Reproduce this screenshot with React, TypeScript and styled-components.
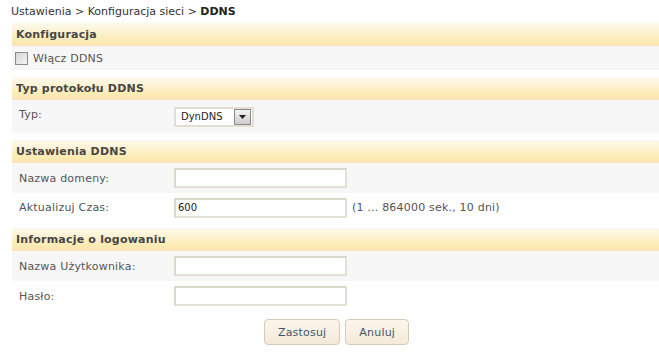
import React, { useState } from "react";
import styled, { createGlobalStyle } from "styled-components";

const Global = createGlobalStyle`
  html, body {
    margin: 0;
    padding: 0;
    background: #fff;
  }
  body {
    font-family: "DejaVu Sans", Verdana, sans-serif;
    font-size: 11px;
    color: #4d4d4d;
  }
`;

const Page = styled.div`
  width: 659px;
  height: 360px;
  padding: 5px 0 0 12px;
  box-sizing: border-box;
  overflow: hidden;
`;

const Crumbs = styled.div`
  font-size: 11px;
  color: #333;
  height: 18px;
  margin-left: -1px;

  b {
    font-weight: bold;
    color: #222;
  }
`;

const Section = styled.section<{ gap?: number }>`
  margin-bottom: ${(p) => p.gap ?? 7}px;
`;

const Head = styled.h3`
  margin: 0;
  height: 23px;
  line-height: 23px;
  padding-left: 4px;
  font-size: 11px;
  font-weight: bold;
  letter-spacing: 0.2px;
  color: #464646;
  background: linear-gradient(
    to bottom,
    #fdf9ee 0%,
    #fcf1cc 45%,
    #fbeab0 80%,
    #fbe3bb 100%
  );
`;

const Row = styled.div<{ h: number; odd?: boolean }>`
  display: grid;
  grid-template-columns: 162px auto;
  align-items: center;
  height: ${(p) => p.h}px;
  background: ${(p) => (p.odd ? "#fff" : "#f7f7f7")};
`;

const Label = styled.span<{ top?: boolean }>`
  padding-left: 7px;
  color: #555;
  letter-spacing: 0.2px;
  align-self: ${(p) => (p.top ? "start" : "center")};
  padding-top: ${(p) => (p.top ? 8 : 0)}px;
`;

const Field = styled.div`
  display: flex;
  align-items: center;
  gap: 5px;
`;

const TextInput = styled.input`
  width: 173px;
  height: 20px;
  box-sizing: border-box;
  border: 2px solid #dcd8cc;
  border-right-color: #e4e0d6;
  border-bottom-color: #e4e0d6;
  padding: 0 2px;
  font-family: "DejaVu Sans", Verdana, sans-serif;
  font-size: 10px;
  color: #222;
  background: #fff;
  outline: none;
`;

const Hint = styled.span`
  color: #555;
  letter-spacing: 0.2px;
`;

const CheckRow = styled.label`
  display: flex;
  align-items: center;
  gap: 5px;
  padding-left: 3px;
  color: #555;
  letter-spacing: 0.2px;
  height: 24px;
  background: #f7f7f7;
`;

const Box = styled.span`
  width: 11px;
  height: 11px;
  border: 1px solid #8c8c8c;
  background: linear-gradient(135deg, #d6d6d6, #f4f4f4);
`;

const Select = styled.div`
  display: flex;
  align-items: center;
  justify-content: space-between;
  width: 80px;
  height: 20px;
  box-sizing: border-box;
  border: 2px solid #e2ded4;
  background: #fff;
  padding-left: 5px;
  padding-right: 1px;
  font-size: 10px;
  color: #222;
`;

const Arrow = styled.span`
  width: 17px;
  height: 16px;
  box-sizing: border-box;
  border: 1px solid #8a8a8a;
  background: linear-gradient(#f2f2f2, #cdcdcd);
  display: flex;
  align-items: center;
  justify-content: center;
`;

const Buttons = styled.div`
  display: flex;
  justify-content: center;
  gap: 5px;
  padding-top: 8px;
  padding-left: 2px;
`;

const Button = styled.button`
  height: 26px;
  padding: 0 13px;
  border: 1px solid #d6cab5;
  border-radius: 4px;
  background: linear-gradient(#fbf6ec, #f4ead8);
  font-family: "DejaVu Sans", Verdana, sans-serif;
  font-size: 11px;
  letter-spacing: 0.2px;
  color: #3d566b;
  cursor: pointer;
`;

export default function App() {
  const [enabled, setEnabled] = useState(false);

  return (
    <Page>
      <Global />
      <Crumbs>
        Ustawienia &gt; Konfiguracja sieci &gt; <b>DDNS</b>
      </Crumbs>

      <Section>
        <Head>Konfiguracja</Head>
        <CheckRow onClick={() => setEnabled(!enabled)}>
          <Box />
          Włącz DDNS
        </CheckRow>
      </Section>

      <Section>
        <Head>Typ protokołu DDNS</Head>
        <Row h={33}>
          <Label top>Typ:</Label>
          <Field>
            <Select>
              DynDNS
              <Arrow>
                <svg width="7" height="4" viewBox="0 0 7 4">
                  <path d="M0 0h7L3.5 4z" fill="#222" />
                </svg>
              </Arrow>
            </Select>
          </Field>
        </Row>
      </Section>

      <Section gap={6}>
        <Head>Ustawienia DDNS</Head>
        <Row h={30}>
          <Label>Nazwa domeny:</Label>
          <Field>
            <TextInput defaultValue="" />
          </Field>
        </Row>
        <Row h={29} odd>
          <Label>Aktualizuj Czas:</Label>
          <Field>
            <TextInput defaultValue="600" />
            <Hint>(1 ... 864000 sek., 10 dni)</Hint>
          </Field>
        </Row>
      </Section>

      <Section gap={0}>
        <Head>Informacje o logowaniu</Head>
        <Row h={30}>
          <Label>Nazwa Użytkownika:</Label>
          <Field>
            <TextInput defaultValue="" />
          </Field>
        </Row>
        <Row h={30} odd>
          <Label>Hasło:</Label>
          <Field>
            <TextInput type="password" defaultValue="" />
          </Field>
        </Row>
      </Section>

      <Buttons>
        <Button>Zastosuj</Button>
        <Button>Anuluj</Button>
      </Buttons>
    </Page>
  );
}
